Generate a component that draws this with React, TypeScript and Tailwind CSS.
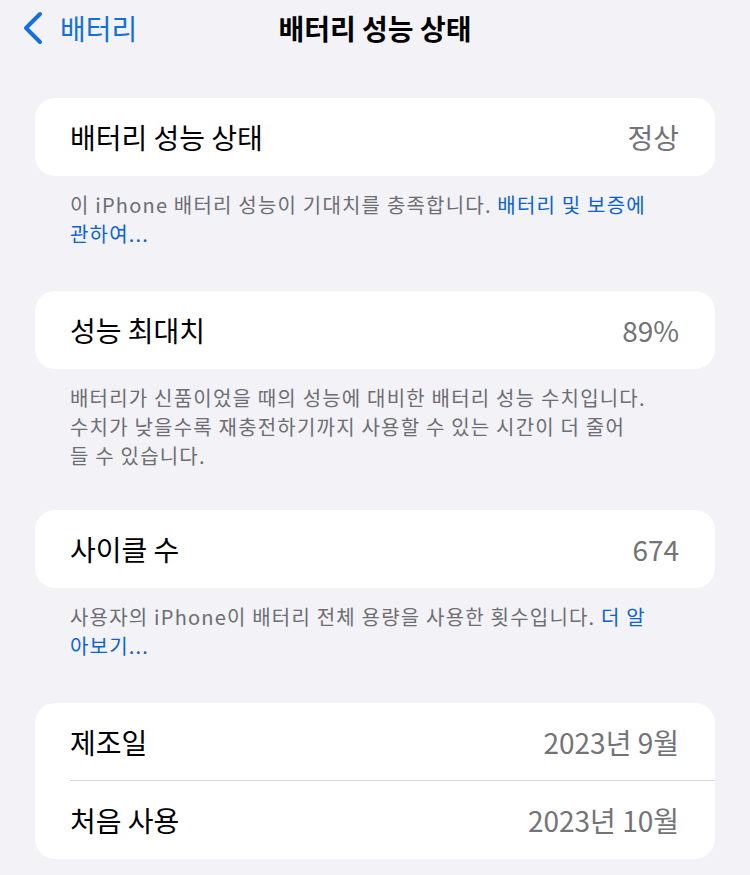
import { ReactNode } from 'react'

const font = { fontFamily: '"Noto Sans CJK KR", "Noto Sans", sans-serif' }

function Row({ label, value, divider }: { label: string; value: string; divider?: boolean }) {
  return (
    <div className="flex h-[78px] items-stretch pl-[35px]">
      <div
        className={
          'flex flex-1 items-center justify-between pr-[36px] ' +
          (divider ? 'border-b border-[#d6d6d9]' : '')
        }
      >
        <span className="text-[28px] text-black">{label}</span>
        <span className="text-[28px] text-[#737377]">{value}</span>
      </div>
    </div>
  )
}

function Card({ children }: { children: ReactNode }) {
  return <div className="overflow-hidden rounded-[20px] bg-white">{children}</div>
}

function Footer({ children, className }: { children: ReactNode; className: string }) {
  return (
    <p
      className={
        'px-[35px] pt-[14px] text-[20px] leading-[29px] tracking-[1.2px] text-[#6d6d72] ' +
        className
      }
    >
      {children}
    </p>
  )
}

function Link({ children }: { children: ReactNode }) {
  return <span className="text-[#0b63cf]">{children}</span>
}

export default function App() {
  return (
    <div className="min-h-[875px] w-[750px] bg-[#f2f2f7]" style={font}>
      <header className="grid h-[56px] grid-cols-[1fr_auto_1fr] items-center">
        <div className="flex items-center gap-[16px] pl-[22px] text-[#1470d9]">
          <svg width="22" height="34" viewBox="0 0 22 34" fill="none">
            <path
              d="M18 3 L4 17 L18 31"
              stroke="currentColor"
              strokeWidth="4"
              strokeLinecap="round"
              strokeLinejoin="round"
            />
          </svg>
          <span className="text-[28px]">배터리</span>
        </div>
        <h1 className="text-[28px] font-bold text-black">배터리 성능 상태</h1>
        <div />
      </header>

      <main className="px-[35px] pt-[42px] pb-[18px]">
        <Card>
          <Row label="배터리 성능 상태" value="정상" />
        </Card>
        <Footer className="mb-[43px]">
          이 iPhone 배터리 성능이 기대치를 충족합니다. <Link>배터리 및 보증에</Link>
          <br />
          <Link>관하여...</Link>
        </Footer>

        <Card>
          <Row label="성능 최대치" value="89%" />
        </Card>
        <Footer className="mb-[40px]">
          배터리가 신품이었을 때의 성능에 대비한 배터리 성능 수치입니다.
          <br />
          수치가 낮을수록 재충전하기까지 사용할 수 있는 시간이 더 줄어
          <br />들 수 있습니다.
        </Footer>

        <Card>
          <Row label="사이클 수" value="674" />
        </Card>
        <Footer className="mb-[43px]">
          사용자의 iPhone이 배터리 전체 용량을 사용한 횟수입니다. <Link>더 알</Link>
          <br />
          <Link>아보기...</Link>
        </Footer>

        <Card>
          <Row label="제조일" value="2023년 9월" divider />
          <Row label="처음 사용" value="2023년 10월" />
        </Card>
      </main>
    </div>
  )
}
